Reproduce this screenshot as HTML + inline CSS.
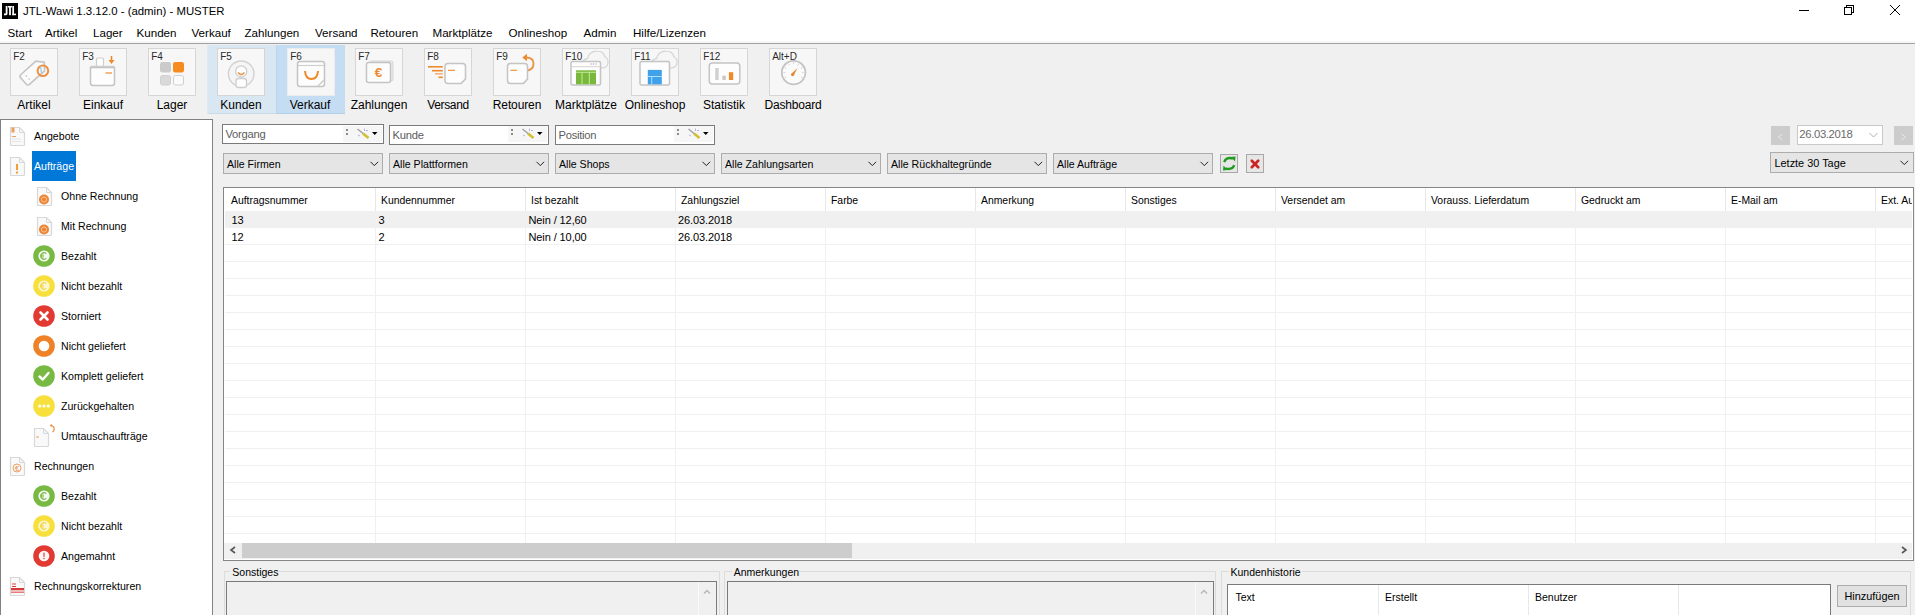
<!DOCTYPE html><html><head><meta charset="utf-8"><style>
*{margin:0;padding:0;box-sizing:border-box}
html,body{width:1915px;height:615px;overflow:hidden;background:#f0f0f0;font-family:"Liberation Sans",sans-serif;}
.t{position:absolute;white-space:nowrap;}
.r{position:absolute;}
svg{position:absolute;overflow:visible}
</style></head><body>
<div class="r" style="left:0px;top:0px;width:1915px;height:41px;background:#fff"></div>
<div class="r" style="left:0px;top:41px;width:1915px;height:2px;background:#f7f7f7"></div>
<div class="r" style="left:0px;top:43px;width:1915px;height:1px;background:#a0a0a0"></div>
<div class="r" style="left:2px;top:3px;width:16px;height:16px;background:#000"></div>
<svg style="left:2px;top:3px" width="16" height="16"><g fill="#fff"><path d="M3.7 3 H5.5 V10.8 Q5.5 12.2 4.1 12.2 H2 V10.6 H3.7 Z"/><rect x="6" y="3" width="3.9" height="1.5"/><rect x="7.1" y="3" width="1.8" height="9.2"/><rect x="10.3" y="3" width="1.7" height="9.2"/><rect x="10.3" y="10.6" width="3.7" height="1.6"/></g></svg>
<div class="t" style="left:23px;top:6.35px;font-size:11.4px;line-height:11.4px;color:#000;">JTL-Wawi 1.3.12.0 - (admin) - MUSTER</div>
<svg style="left:0;top:0" width="1915" height="44"><g stroke="#000" stroke-width="1" fill="none" shape-rendering="crispEdges"><line x1="1799" y1="10.5" x2="1809" y2="10.5"/><rect x="1844.5" y="7.5" width="7" height="7"/><polyline points="1846.5,7.5 1846.5,5.5 1853.5,5.5 1853.5,12.5 1851.5,12.5"/></g><g stroke="#000" stroke-width="1" fill="none"><line x1="1890" y1="5" x2="1900" y2="15"/><line x1="1900" y1="5" x2="1890" y2="15"/></g></svg>
<div class="t" style="left:7.5px;top:27.18px;font-size:11.6px;line-height:11.6px;color:#000;">Start</div>
<div class="t" style="left:45px;top:27.18px;font-size:11.6px;line-height:11.6px;color:#000;">Artikel</div>
<div class="t" style="left:93px;top:27.18px;font-size:11.6px;line-height:11.6px;color:#000;">Lager</div>
<div class="t" style="left:136.5px;top:27.18px;font-size:11.6px;line-height:11.6px;color:#000;">Kunden</div>
<div class="t" style="left:191.5px;top:27.18px;font-size:11.6px;line-height:11.6px;color:#000;">Verkauf</div>
<div class="t" style="left:244.5px;top:27.18px;font-size:11.6px;line-height:11.6px;color:#000;">Zahlungen</div>
<div class="t" style="left:315px;top:27.18px;font-size:11.6px;line-height:11.6px;color:#000;">Versand</div>
<div class="t" style="left:370.5px;top:27.18px;font-size:11.6px;line-height:11.6px;color:#000;">Retouren</div>
<div class="t" style="left:432.5px;top:27.18px;font-size:11.6px;line-height:11.6px;color:#000;">Marktplätze</div>
<div class="t" style="left:508.5px;top:27.18px;font-size:11.6px;line-height:11.6px;color:#000;">Onlineshop</div>
<div class="t" style="left:583.5px;top:27.18px;font-size:11.6px;line-height:11.6px;color:#000;">Admin</div>
<div class="t" style="left:633px;top:27.18px;font-size:11.6px;line-height:11.6px;color:#000;">Hilfe/Lizenzen</div>
<div class="r" style="left:207px;top:45px;width:69px;height:69px;background:#d9e7f3;border-left:1px solid #dce9f4;border-bottom:1px solid #c9dbeb"></div>
<div class="r" style="left:276px;top:45px;width:69px;height:69px;background:#c5ddf3;border-left:1px solid #b6d4ee;border-bottom:1px solid #b3d0ea"></div>
<div class="r" style="left:10px;top:48px;width:48px;height:48px;background:#f7f7f7;border:1px solid #d6d6d6"></div>
<div class="t" style="left:13.2px;top:51.53px;font-size:10px;line-height:10px;color:#2a2a2a;">F2</div>
<div class="t" style="left:-10px;top:98.54px;width:88px;text-align:center;font-size:12px;line-height:12px;color:#000;letter-spacing:0px">Artikel</div>
<div class="r" style="left:79px;top:48px;width:48px;height:48px;background:#f7f7f7;border:1px solid #d6d6d6"></div>
<div class="t" style="left:82.2px;top:51.53px;font-size:10px;line-height:10px;color:#2a2a2a;">F3</div>
<div class="t" style="left:59px;top:98.54px;width:88px;text-align:center;font-size:12px;line-height:12px;color:#000;letter-spacing:0px">Einkauf</div>
<div class="r" style="left:148px;top:48px;width:48px;height:48px;background:#f7f7f7;border:1px solid #d6d6d6"></div>
<div class="t" style="left:151.2px;top:51.53px;font-size:10px;line-height:10px;color:#2a2a2a;">F4</div>
<div class="t" style="left:128px;top:98.54px;width:88px;text-align:center;font-size:12px;line-height:12px;color:#000;letter-spacing:0px">Lager</div>
<div class="r" style="left:217px;top:48px;width:48px;height:48px;background:#f7f7f7;border:1px solid #d6d6d6"></div>
<div class="t" style="left:220.2px;top:51.53px;font-size:10px;line-height:10px;color:#2a2a2a;">F5</div>
<div class="t" style="left:197px;top:98.54px;width:88px;text-align:center;font-size:12px;line-height:12px;color:#000;letter-spacing:0px">Kunden</div>
<div class="r" style="left:287px;top:48px;width:48px;height:48px;background:#f6f6f6;border:1px solid #ececec"></div>
<div class="t" style="left:290.2px;top:51.53px;font-size:10px;line-height:10px;color:#2a2a2a;">F6</div>
<div class="t" style="left:266px;top:98.54px;width:88px;text-align:center;font-size:12px;line-height:12px;color:#000;letter-spacing:0px">Verkauf</div>
<div class="r" style="left:355px;top:48px;width:48px;height:48px;background:#f7f7f7;border:1px solid #d6d6d6"></div>
<div class="t" style="left:358.2px;top:51.53px;font-size:10px;line-height:10px;color:#2a2a2a;">F7</div>
<div class="t" style="left:335px;top:98.54px;width:88px;text-align:center;font-size:12px;line-height:12px;color:#000;letter-spacing:0px">Zahlungen</div>
<div class="r" style="left:424px;top:48px;width:48px;height:48px;background:#f7f7f7;border:1px solid #d6d6d6"></div>
<div class="t" style="left:427.2px;top:51.53px;font-size:10px;line-height:10px;color:#2a2a2a;">F8</div>
<div class="t" style="left:404px;top:98.54px;width:88px;text-align:center;font-size:12px;line-height:12px;color:#000;letter-spacing:-0.35px">Versand</div>
<div class="r" style="left:493px;top:48px;width:48px;height:48px;background:#f7f7f7;border:1px solid #d6d6d6"></div>
<div class="t" style="left:496.2px;top:51.53px;font-size:10px;line-height:10px;color:#2a2a2a;">F9</div>
<div class="t" style="left:473px;top:98.54px;width:88px;text-align:center;font-size:12px;line-height:12px;color:#000;letter-spacing:-0.12px">Retouren</div>
<div class="r" style="left:562px;top:48px;width:48px;height:48px;background:#f7f7f7;border:1px solid #d6d6d6"></div>
<div class="t" style="left:565.2px;top:51.53px;font-size:10px;line-height:10px;color:#2a2a2a;">F10</div>
<div class="t" style="left:542px;top:98.54px;width:88px;text-align:center;font-size:12px;line-height:12px;color:#000;letter-spacing:0px">Marktplätze</div>
<div class="r" style="left:631px;top:48px;width:48px;height:48px;background:#f7f7f7;border:1px solid #d6d6d6"></div>
<div class="t" style="left:634.2px;top:51.53px;font-size:10px;line-height:10px;color:#2a2a2a;">F11</div>
<div class="t" style="left:611px;top:98.54px;width:88px;text-align:center;font-size:12px;line-height:12px;color:#000;letter-spacing:0px">Onlineshop</div>
<div class="r" style="left:700px;top:48px;width:48px;height:48px;background:#f7f7f7;border:1px solid #d6d6d6"></div>
<div class="t" style="left:703.2px;top:51.53px;font-size:10px;line-height:10px;color:#2a2a2a;">F12</div>
<div class="t" style="left:680px;top:98.54px;width:88px;text-align:center;font-size:12px;line-height:12px;color:#000;letter-spacing:0px">Statistik</div>
<div class="r" style="left:769px;top:48px;width:48px;height:48px;background:#f7f7f7;border:1px solid #d6d6d6"></div>
<div class="t" style="left:772.2px;top:51.53px;font-size:10px;line-height:10px;color:#2a2a2a;">Alt+D</div>
<div class="t" style="left:749px;top:98.54px;width:88px;text-align:center;font-size:12px;line-height:12px;color:#000;letter-spacing:-0.2px">Dashboard</div>
<svg style="left:10px;top:48px" width="48" height="48" viewBox="0 0 48 48"><g transform="translate(23.5 24) rotate(-42)"><path d="M-11 -6.5 H9 L14.5 0 L9 6.5 H-11 Q-13.5 6.5 -13.5 4 V-4 Q-13.5 -6.5 -11 -6.5 Z" fill="#fbfbfb" stroke="#c4c4c4" stroke-width="1.6"/><line x1="-8" y1="-2.5" x2="-8" y2="-1" stroke="#aaa" stroke-width="1"/><line x1="-8" y1="1.5" x2="-8" y2="3" stroke="#bbb" stroke-width="1"/></g><circle cx="32.9" cy="22.8" r="5.3" fill="none" stroke="#ee9040" stroke-width="2"/><line x1="30.5" y1="18" x2="31.5" y2="25" stroke="#9ec6e6" stroke-width="1.3"/></svg>
<svg style="left:79px;top:48px" width="48" height="48" viewBox="0 0 48 48"><rect x="17.5" y="10" width="7" height="10" rx="1" fill="#fdfdfd" stroke="#cfcfcf" stroke-width="1.2"/><path d="M11.5 18.5 H35.5" stroke="#d0d0d0" stroke-width="1.5"/><path d="M11.5 19.5 H35.5 V35 Q35.5 37.5 33 37.5 H14 Q11.5 37.5 11.5 35 Z" fill="#fdfdfd" stroke="#c4c4c4" stroke-width="1.5"/><line x1="26.5" y1="25" x2="33" y2="25" stroke="#ef8a2c" stroke-width="1.2"/><line x1="32.5" y1="8" x2="32.5" y2="13" stroke="#ef8a2c" stroke-width="1.6"/><polygon points="29.5,12 35.5,12 32.5,16" fill="#ef8a2c"/></svg>
<svg style="left:148px;top:48px" width="48" height="48" viewBox="0 0 48 48"><rect x="12" y="14" width="11" height="10.5" rx="2.2" fill="#cbcbcb"/><rect x="25" y="14" width="11" height="10.5" rx="2.2" fill="#f68b1f"/><rect x="12.5" y="27.5" width="10" height="9.5" rx="2" fill="#d9d9d9" stroke="#cfcfcf" stroke-width="1"/><rect x="25.5" y="27.5" width="10" height="9.5" rx="2" fill="#fbfbfb" stroke="#cfcfcf" stroke-width="1"/></svg>
<svg style="left:217px;top:48px" width="48" height="48" viewBox="0 0 48 48"><circle cx="24.2" cy="25.8" r="12.8" fill="#f5f5f5" stroke="#d2d2d2" stroke-width="1.4"/><rect x="19" y="30.5" width="10.5" height="9" rx="2.5" fill="#fdfdfd" stroke="#cdcdcd" stroke-width="1.3"/><circle cx="24.2" cy="23.4" r="5.6" fill="#fdfdfd" stroke="#cdcdcd" stroke-width="1.3"/><path d="M21 24.6 Q24.2 28.6 27.4 24.6" fill="none" stroke="#e8974f" stroke-width="1.6"/></svg>
<svg style="left:287px;top:48px" width="48" height="48" viewBox="0 0 48 48"><rect x="10.5" y="13.5" width="27" height="25" rx="2.5" fill="#fdfdfd" stroke="#c4c4c4" stroke-width="1.5"/><line x1="11" y1="17.5" x2="37" y2="17.5" stroke="#d0d0d0" stroke-width="1.2"/><path d="M30.5 38.5 L37.5 31.5" stroke="#c8c8c8" stroke-width="1.3"/><path d="M18 23 Q18.5 31 24.5 31 Q30.5 31 31 23" fill="none" stroke="#ef8a2c" stroke-width="2"/></svg>
<svg style="left:355px;top:48px" width="48" height="48" viewBox="0 0 48 48"><rect x="14.5" y="13.2" width="23.5" height="19.5" rx="2" fill="#ececec" stroke="#dadada" stroke-width="1.2"/><rect x="11.5" y="14.5" width="24" height="20" rx="2" fill="#fdfdfd" stroke="#c4c4c4" stroke-width="1.5"/><text x="23.4" y="29.3" font-family="Liberation Sans" font-weight="bold" font-size="13.5" fill="#ee8a2e" text-anchor="middle">€</text></svg>
<svg style="left:424px;top:48px" width="48" height="48" viewBox="0 0 48 48"><path d="M24 15.5 H38.5 Q41.5 15.5 41.5 18.5 V31 L37 35.5 H24 Q21 35.5 21 32.5 V18.5 Q21 15.5 24 15.5 Z" fill="#fdfdfd" stroke="#c4c4c4" stroke-width="1.5"/><line x1="37" y1="35.5" x2="41.5" y2="31" stroke="#c8c8c8" stroke-width="1.2"/><line x1="24" y1="22.3" x2="31" y2="22.3" stroke="#ef8a2c" stroke-width="1.1"/><line x1="4" y1="18.8" x2="18.8" y2="18.8" stroke="#ef8a2c" stroke-width="1.6"/><line x1="8" y1="22.7" x2="18.8" y2="22.7" stroke="#ef8a2c" stroke-width="1.6"/><line x1="11" y1="25.8" x2="18.8" y2="25.8" stroke="#f1b27a" stroke-width="1.6"/><line x1="14.5" y1="29.3" x2="18.8" y2="29.3" stroke="#ef8a2c" stroke-width="1.6"/></svg>
<svg style="left:493px;top:48px" width="48" height="48" viewBox="0 0 48 48"><path d="M33 9.5 Q40.5 9.5 40.5 15.5 Q40.5 21.5 34.5 22.5" fill="none" stroke="#e8954a" stroke-width="1.9"/><polygon points="29.3,9.5 34,5.8 34,13.2" fill="#ef8a2c"/><path d="M17.5 15.5 H31.5 Q34.5 15.5 34.5 18.5 V31 L30.5 35.5 H17.5 Q14.5 35.5 14.5 32.5 V18.5 Q14.5 15.5 17.5 15.5 Z" fill="#fdfdfd" stroke="#c4c4c4" stroke-width="1.5"/><line x1="30.5" y1="35.5" x2="34.5" y2="31" stroke="#c8c8c8" stroke-width="1.2"/><line x1="17.5" y1="22.3" x2="24" y2="22.3" stroke="#ef8a2c" stroke-width="1.1"/></svg>
<svg style="left:562px;top:48px" width="48" height="48" viewBox="0 0 48 48"><path d="M20.5 18 Q19.5 11.5 25.5 10.5 Q27.5 3 35 3.2 Q41.5 3.2 43 9 Q46.5 10.5 46 15 Q45.5 19.5 41 19.8 H22 Z" fill="#f6f6f6" stroke="#d6d6d6" stroke-width="1.3"/><rect x="9" y="13.5" width="29.5" height="23.5" rx="1.5" fill="#fdfdfd" stroke="#c4c4c4" stroke-width="1.5"/><line x1="9.5" y1="18.7" x2="38" y2="18.7" stroke="#d4d4d4" stroke-width="1"/><circle cx="29" cy="16" r="0.8" fill="#d8a8a8"/><circle cx="31.5" cy="16" r="0.8" fill="#a8a8d8"/><circle cx="34" cy="16" r="0.8" fill="#d8a8a8"/><rect x="14" y="22.3" width="20" height="14" fill="#7ab83c"/><line x1="14" y1="24.3" x2="34" y2="24.3" stroke="#c8f0a0" stroke-width="0.9"/><line x1="20" y1="24.3" x2="20" y2="36.3" stroke="#c8f0a0" stroke-width="0.9"/><line x1="27.3" y1="24.3" x2="27.3" y2="36.3" stroke="#c8f0a0" stroke-width="0.9"/></svg>
<svg style="left:631px;top:48px" width="48" height="48" viewBox="0 0 48 48"><path d="M20.5 18 Q19.5 11.5 25.5 10.5 Q27.5 3 35 3.2 Q41.5 3.2 43 9 Q46.5 10.5 46 15 Q45.5 19.5 41 19.8 H22 Z" fill="#f6f6f6" stroke="#d6d6d6" stroke-width="1.3"/><rect x="9" y="13.5" width="29.5" height="23.5" rx="1.5" fill="#fdfdfd" stroke="#c4c4c4" stroke-width="1.5"/><rect x="16.8" y="21.9" width="14" height="14.4" fill="#3ea1e9"/><line x1="16.8" y1="28.5" x2="30.8" y2="28.5" stroke="#bfe6ff" stroke-width="0.9"/><line x1="20.7" y1="28.5" x2="20.7" y2="36.3" stroke="#bfe6ff" stroke-width="0.9"/></svg>
<svg style="left:700px;top:48px" width="48" height="48" viewBox="0 0 48 48"><rect x="9.3" y="15" width="30.5" height="21" rx="3" fill="#fdfdfd" stroke="#c4c4c4" stroke-width="1.5"/><rect x="15.2" y="20" width="3.5" height="12" fill="#d0d0d0"/><rect x="22.3" y="27.7" width="3.5" height="4.3" fill="#c9c9c9"/><rect x="28.9" y="24.2" width="4.3" height="7.8" fill="#ef8a2c"/></svg>
<svg style="left:769px;top:48px" width="48" height="48" viewBox="0 0 48 48"><circle cx="24.6" cy="24.6" r="11.8" fill="#fbfbfb" stroke="#c4c4c4" stroke-width="1.8"/><line x1="17.24" y1="28.85" x2="15.77" y2="29.70" stroke="#d0d0d0" stroke-width="1"/><line x1="16.10" y1="24.60" x2="14.40" y2="24.60" stroke="#d0d0d0" stroke-width="1"/><line x1="17.24" y1="20.35" x2="15.77" y2="19.50" stroke="#d0d0d0" stroke-width="1"/><line x1="20.35" y1="17.24" x2="19.50" y2="15.77" stroke="#d0d0d0" stroke-width="1"/><line x1="24.60" y1="16.10" x2="24.60" y2="14.40" stroke="#d0d0d0" stroke-width="1"/><line x1="28.85" y1="17.24" x2="29.70" y2="15.77" stroke="#d0d0d0" stroke-width="1"/><line x1="31.96" y1="20.35" x2="33.43" y2="19.50" stroke="#d0d0d0" stroke-width="1"/><line x1="33.10" y1="24.60" x2="34.80" y2="24.60" stroke="#d0d0d0" stroke-width="1"/><line x1="31.96" y1="28.85" x2="33.43" y2="29.70" stroke="#d0d0d0" stroke-width="1"/><path d="M22.6 25.6 L28.6 20 L24.6 27.6 Z" fill="#e08a35"/><circle cx="23.6" cy="26.6" r="1.6" fill="#e08a35"/></svg>

<div class="r" style="left:0px;top:119px;width:213px;height:496px;background:#fff;border:1px solid #828282;border-bottom:none"></div>
<div class="r" style="left:32px;top:151px;width:44px;height:30px;background:#0078d7"></div>
<div class="t" style="left:34px;top:131.03px;font-size:10.6px;line-height:10.6px;color:#000;">Angebote</div>
<div class="t" style="left:34px;top:161.03px;font-size:10.6px;line-height:10.6px;color:#fff;">Aufträge</div>
<div class="t" style="left:61px;top:191.03px;font-size:10.6px;line-height:10.6px;color:#000;">Ohne Rechnung</div>
<div class="t" style="left:61px;top:221.03px;font-size:10.6px;line-height:10.6px;color:#000;">Mit Rechnung</div>
<div class="t" style="left:61px;top:251.03px;font-size:10.6px;line-height:10.6px;color:#000;">Bezahlt</div>
<div class="t" style="left:61px;top:281.03px;font-size:10.6px;line-height:10.6px;color:#000;">Nicht bezahlt</div>
<div class="t" style="left:61px;top:311.03px;font-size:10.6px;line-height:10.6px;color:#000;">Storniert</div>
<div class="t" style="left:61px;top:341.03px;font-size:10.6px;line-height:10.6px;color:#000;">Nicht geliefert</div>
<div class="t" style="left:61px;top:371.03px;font-size:10.6px;line-height:10.6px;color:#000;">Komplett geliefert</div>
<div class="t" style="left:61px;top:401.03px;font-size:10.6px;line-height:10.6px;color:#000;">Zurückgehalten</div>
<div class="t" style="left:61px;top:431.03px;font-size:10.6px;line-height:10.6px;color:#000;">Umtauschaufträge</div>
<div class="t" style="left:34px;top:461.03px;font-size:10.6px;line-height:10.6px;color:#000;">Rechnungen</div>
<div class="t" style="left:61px;top:491.03px;font-size:10.6px;line-height:10.6px;color:#000;">Bezahlt</div>
<div class="t" style="left:61px;top:521.03px;font-size:10.6px;line-height:10.6px;color:#000;">Nicht bezahlt</div>
<div class="t" style="left:61px;top:551.03px;font-size:10.6px;line-height:10.6px;color:#000;">Angemahnt</div>
<div class="t" style="left:34px;top:581.03px;font-size:10.6px;line-height:10.6px;color:#000;">Rechnungskorrekturen</div>
<svg style="left:8.5px;top:126px" width="17" height="21" viewBox="0 0 17 21"><path d="M1.5 1.5 H10.5 L15.5 6.5 V18.5 Q15.5 19.5 14.5 19.5 H2.5 Q1.5 19.5 1.5 18.5 Z" fill="#f9f9f9" stroke="#d8d8d8" stroke-width="1.2"/><path d="M10.5 1.5 V6.5 H15.5" fill="none" stroke="#d8d8d8" stroke-width="1"/><rect x="2.5" y="1.5" width="3" height="5" fill="#e8a060"/><line x1="3" y1="10.5" x2="7" y2="10.5" stroke="#e8a060" stroke-width="1"/><line x1="3" y1="13" x2="12" y2="13" stroke="#e6e6e6" stroke-width="1"/><line x1="3" y1="15.5" x2="12" y2="15.5" stroke="#e6e6e6" stroke-width="1"/></svg>
<svg style="left:8.5px;top:156px" width="17" height="21" viewBox="0 0 17 21"><path d="M1.5 1.5 H10.5 L15.5 6.5 V18.5 Q15.5 19.5 14.5 19.5 H2.5 Q1.5 19.5 1.5 18.5 Z" fill="#f9f9f9" stroke="#d8d8d8" stroke-width="1.2"/><path d="M10.5 1.5 V6.5 H15.5" fill="none" stroke="#d8d8d8" stroke-width="1"/><rect x="7" y="8" width="2" height="6" fill="#f0a030"/><rect x="7" y="15.5" width="2" height="2" fill="#f0a030"/></svg>
<svg style="left:35.5px;top:186px" width="17" height="21" viewBox="0 0 17 21"><path d="M1.5 1.5 H10.5 L15.5 6.5 V18.5 Q15.5 19.5 14.5 19.5 H2.5 Q1.5 19.5 1.5 18.5 Z" fill="#f9f9f9" stroke="#d8d8d8" stroke-width="1.2"/><path d="M10.5 1.5 V6.5 H15.5" fill="none" stroke="#d8d8d8" stroke-width="1"/><circle cx="8" cy="13.5" r="5" fill="#ec8432"/><circle cx="8" cy="13.5" r="2.6" fill="none" stroke="#f6c8a0" stroke-width="1"/></svg>
<svg style="left:35.5px;top:216px" width="17" height="21" viewBox="0 0 17 21"><path d="M1.5 1.5 H10.5 L15.5 6.5 V18.5 Q15.5 19.5 14.5 19.5 H2.5 Q1.5 19.5 1.5 18.5 Z" fill="#f9f9f9" stroke="#d8d8d8" stroke-width="1.2"/><path d="M10.5 1.5 V6.5 H15.5" fill="none" stroke="#d8d8d8" stroke-width="1"/><circle cx="8" cy="13.5" r="5" fill="#ec8432"/><circle cx="8" cy="13.5" r="2.6" fill="none" stroke="#f6c8a0" stroke-width="1"/></svg>
<svg style="left:33px;top:245px" width="22" height="22" viewBox="0 0 22 22"><circle cx="11" cy="11" r="10.8" fill="#78b943"/><circle cx="11" cy="11" r="5.6" fill="#f4f9ef"/><path d="M13.3 8.6 A3.2 3.2 0 1 0 13.3 13.4" fill="none" stroke="#78b943" stroke-width="1.2"/><line x1="7.2" y1="10.2" x2="11" y2="10.2" stroke="#78b943" stroke-width="0.9"/><line x1="7.2" y1="11.9" x2="11" y2="11.9" stroke="#78b943" stroke-width="0.9"/></svg>
<svg style="left:33px;top:275px" width="22" height="22" viewBox="0 0 22 22"><circle cx="11" cy="11" r="10.8" fill="#f7e03c"/><circle cx="11" cy="11" r="5.6" fill="#fcf6cf"/><path d="M13.3 8.6 A3.2 3.2 0 1 0 13.3 13.4" fill="none" stroke="#eed64a" stroke-width="1.2"/><line x1="7.2" y1="10.2" x2="11" y2="10.2" stroke="#eed64a" stroke-width="0.9"/><line x1="7.2" y1="11.9" x2="11" y2="11.9" stroke="#eed64a" stroke-width="0.9"/></svg>
<svg style="left:33px;top:305px" width="22" height="22" viewBox="0 0 22 22"><circle cx="11" cy="11" r="10.8" fill="#e23a33"/><g stroke="#fff" stroke-width="2.6" stroke-linecap="round"><line x1="7.5" y1="7.5" x2="14.5" y2="14.5"/><line x1="14.5" y1="7.5" x2="7.5" y2="14.5"/></g></svg>
<svg style="left:33px;top:335px" width="22" height="22" viewBox="0 0 22 22"><circle cx="11" cy="11" r="10.8" fill="#ef8127"/><circle cx="11" cy="11" r="5.3" fill="#fff"/></svg>
<svg style="left:33px;top:365px" width="22" height="22" viewBox="0 0 22 22"><circle cx="11" cy="11" r="10.8" fill="#78b943"/><polyline points="6.5,11.5 9.8,14.5 15.5,8" fill="none" stroke="#fff" stroke-width="2.4" stroke-linecap="round" stroke-linejoin="round"/></svg>
<svg style="left:33px;top:395px" width="22" height="22" viewBox="0 0 22 22"><circle cx="11" cy="11" r="10.8" fill="#f7e03c"/><circle cx="6.8" cy="11" r="1.6" fill="#fff"/><circle cx="11" cy="11" r="1.6" fill="#fff"/><circle cx="15.2" cy="11" r="1.6" fill="#fff"/></svg>
<svg style="left:33px;top:427px" width="17" height="21" viewBox="0 0 17 21"><path d="M1.5 1.5 H10.5 L15.5 6.5 V18.5 Q15.5 19.5 14.5 19.5 H2.5 Q1.5 19.5 1.5 18.5 Z" fill="#f9f9f9" stroke="#d8d8d8" stroke-width="1.2"/><path d="M10.5 1.5 V6.5 H15.5" fill="none" stroke="#d8d8d8" stroke-width="1"/><line x1="3" y1="10" x2="6" y2="10" stroke="#e8a060" stroke-width="1"/></svg>
<svg style="left:49px;top:424px" width="8" height="10" viewBox="0 0 8 10"><path d="M2 1.5 A3.5 3.5 0 0 1 3.5 8" fill="none" stroke="#e8904a" stroke-width="1.2"/><polygon points="0.5,1.5 3,0 3,3" fill="#e8904a"/></svg>
<svg style="left:8.5px;top:456px" width="17" height="21" viewBox="0 0 17 21"><path d="M1.5 1.5 H10.5 L15.5 6.5 V18.5 Q15.5 19.5 14.5 19.5 H2.5 Q1.5 19.5 1.5 18.5 Z" fill="#f9f9f9" stroke="#d8d8d8" stroke-width="1.2"/><path d="M10.5 1.5 V6.5 H15.5" fill="none" stroke="#d8d8d8" stroke-width="1"/><circle cx="8" cy="12" r="4" fill="none" stroke="#f0a060" stroke-width="1"/><text x="8" y="15" font-family="Liberation Sans" font-size="7.5" fill="#e8904a" text-anchor="middle">€</text></svg>
<svg style="left:33px;top:485px" width="22" height="22" viewBox="0 0 22 22"><circle cx="11" cy="11" r="10.8" fill="#78b943"/><circle cx="11" cy="11" r="5.6" fill="#f4f9ef"/><path d="M13.3 8.6 A3.2 3.2 0 1 0 13.3 13.4" fill="none" stroke="#78b943" stroke-width="1.2"/><line x1="7.2" y1="10.2" x2="11" y2="10.2" stroke="#78b943" stroke-width="0.9"/><line x1="7.2" y1="11.9" x2="11" y2="11.9" stroke="#78b943" stroke-width="0.9"/></svg>
<svg style="left:33px;top:515px" width="22" height="22" viewBox="0 0 22 22"><circle cx="11" cy="11" r="10.8" fill="#f7e03c"/><circle cx="11" cy="11" r="5.6" fill="#fcf6cf"/><path d="M13.3 8.6 A3.2 3.2 0 1 0 13.3 13.4" fill="none" stroke="#eed64a" stroke-width="1.2"/><line x1="7.2" y1="10.2" x2="11" y2="10.2" stroke="#eed64a" stroke-width="0.9"/><line x1="7.2" y1="11.9" x2="11" y2="11.9" stroke="#eed64a" stroke-width="0.9"/></svg>
<svg style="left:33px;top:545px" width="22" height="22" viewBox="0 0 22 22"><circle cx="11" cy="11" r="10.8" fill="#e23a33"/><circle cx="11" cy="11" r="5.3" fill="#fdf6f6"/><rect x="10.3" y="7.6" width="1.4" height="4.2" fill="#e05a50"/><rect x="10.3" y="12.8" width="1.4" height="1.4" fill="#e05a50"/></svg>
<svg style="left:8.5px;top:576px" width="17" height="21" viewBox="0 0 17 21"><path d="M1.5 1.5 H10.5 L15.5 6.5 V18.5 Q15.5 19.5 14.5 19.5 H2.5 Q1.5 19.5 1.5 18.5 Z" fill="#f9f9f9" stroke="#d8d8d8" stroke-width="1.2"/><path d="M10.5 1.5 V6.5 H15.5" fill="none" stroke="#d8d8d8" stroke-width="1"/><line x1="3" y1="8" x2="7" y2="8" stroke="#d84040" stroke-width="1"/><line x1="3" y1="10.5" x2="7" y2="10.5" stroke="#d84040" stroke-width="1"/><rect x="2" y="12" width="13" height="2.3" fill="#d83a3a"/><rect x="2" y="15.5" width="13" height="1.5" fill="#e87a7a"/></svg>

<div class="r" style="left:222px;top:124px;width:162px;height:20px;background:#fff;border:1px solid #7a7a7a"></div>
<div class="r" style="left:343px;top:126px;width:39px;height:16px;background:#f6f6f6"></div>
<div class="t" style="left:225.5px;top:128.72px;font-size:11.2px;line-height:11.2px;color:#5c5c5c;letter-spacing:-0.25px">Vorgang</div>
<div class="r" style="left:346px;top:129px;width:2px;height:2px;background:#8a8a8a"></div>
<div class="r" style="left:346px;top:133px;width:2px;height:2px;background:#8a8a8a"></div>
<svg style="left:356px;top:128px" width="14" height="12"><line x1="1.5" y1="1" x2="8" y2="6.3" stroke="#a0a0a0" stroke-width="1.4"/><line x1="7" y1="5.5" x2="12.5" y2="10" stroke="#d2c030" stroke-width="2.6"/><line x1="8.5" y1="0.5" x2="8.5" y2="3" stroke="#b8b0e8" stroke-width="1"/><line x1="10" y1="2.5" x2="12" y2="2.5" stroke="#b8b0e8" stroke-width="1"/><line x1="2" y1="7" x2="4" y2="8" stroke="#b8b0e8" stroke-width="1"/></svg>
<svg style="left:372px;top:132px" width="6" height="4"><polygon points="0,0 5.5,0 2.75,3" fill="#000"/></svg>
<div class="r" style="left:389px;top:125px;width:160px;height:20px;background:#fff;border:1px solid #7a7a7a"></div>
<div class="r" style="left:508px;top:126px;width:39px;height:16px;background:#f6f6f6"></div>
<div class="t" style="left:392.5px;top:129.52px;font-size:11.2px;line-height:11.2px;color:#5c5c5c;letter-spacing:-0.25px">Kunde</div>
<div class="r" style="left:511px;top:129px;width:2px;height:2px;background:#8a8a8a"></div>
<div class="r" style="left:511px;top:133px;width:2px;height:2px;background:#8a8a8a"></div>
<svg style="left:521px;top:128px" width="14" height="12"><line x1="1.5" y1="1" x2="8" y2="6.3" stroke="#a0a0a0" stroke-width="1.4"/><line x1="7" y1="5.5" x2="12.5" y2="10" stroke="#d2c030" stroke-width="2.6"/><line x1="8.5" y1="0.5" x2="8.5" y2="3" stroke="#b8b0e8" stroke-width="1"/><line x1="10" y1="2.5" x2="12" y2="2.5" stroke="#b8b0e8" stroke-width="1"/><line x1="2" y1="7" x2="4" y2="8" stroke="#b8b0e8" stroke-width="1"/></svg>
<svg style="left:537px;top:132px" width="6" height="4"><polygon points="0,0 5.5,0 2.75,3" fill="#000"/></svg>
<div class="r" style="left:555px;top:125px;width:160px;height:20px;background:#fff;border:1px solid #7a7a7a"></div>
<div class="r" style="left:674px;top:126px;width:39px;height:16px;background:#f6f6f6"></div>
<div class="t" style="left:558.5px;top:129.52px;font-size:11.2px;line-height:11.2px;color:#5c5c5c;letter-spacing:-0.25px">Position</div>
<div class="r" style="left:677px;top:129px;width:2px;height:2px;background:#8a8a8a"></div>
<div class="r" style="left:677px;top:133px;width:2px;height:2px;background:#8a8a8a"></div>
<svg style="left:687px;top:128px" width="14" height="12"><line x1="1.5" y1="1" x2="8" y2="6.3" stroke="#a0a0a0" stroke-width="1.4"/><line x1="7" y1="5.5" x2="12.5" y2="10" stroke="#d2c030" stroke-width="2.6"/><line x1="8.5" y1="0.5" x2="8.5" y2="3" stroke="#b8b0e8" stroke-width="1"/><line x1="10" y1="2.5" x2="12" y2="2.5" stroke="#b8b0e8" stroke-width="1"/><line x1="2" y1="7" x2="4" y2="8" stroke="#b8b0e8" stroke-width="1"/></svg>
<svg style="left:703px;top:132px" width="6" height="4"><polygon points="0,0 5.5,0 2.75,3" fill="#000"/></svg>
<div class="r" style="left:223px;top:153px;width:160px;height:21px;background:#e5e5e5;border:1px solid #acacac"></div>
<div class="t" style="left:227px;top:159.03px;font-size:10.6px;line-height:10.6px;color:#000;">Alle Firmen</div>
<svg style="left:369.5px;top:161px" width="10" height="6"><polyline points="0.5,0.8 4.3,4.6 8.1,0.8" stroke="#222" stroke-width="1" fill="none"/></svg>
<div class="r" style="left:389px;top:153px;width:160px;height:21px;background:#e5e5e5;border:1px solid #acacac"></div>
<div class="t" style="left:393px;top:159.03px;font-size:10.6px;line-height:10.6px;color:#000;">Alle Plattformen</div>
<svg style="left:535.5px;top:161px" width="10" height="6"><polyline points="0.5,0.8 4.3,4.6 8.1,0.8" stroke="#222" stroke-width="1" fill="none"/></svg>
<div class="r" style="left:555px;top:153px;width:160px;height:21px;background:#e5e5e5;border:1px solid #acacac"></div>
<div class="t" style="left:559px;top:159.03px;font-size:10.6px;line-height:10.6px;color:#000;">Alle Shops</div>
<svg style="left:701.5px;top:161px" width="10" height="6"><polyline points="0.5,0.8 4.3,4.6 8.1,0.8" stroke="#222" stroke-width="1" fill="none"/></svg>
<div class="r" style="left:721px;top:153px;width:160px;height:21px;background:#e5e5e5;border:1px solid #acacac"></div>
<div class="t" style="left:725px;top:159.03px;font-size:10.6px;line-height:10.6px;color:#000;">Alle Zahlungsarten</div>
<svg style="left:867.5px;top:161px" width="10" height="6"><polyline points="0.5,0.8 4.3,4.6 8.1,0.8" stroke="#222" stroke-width="1" fill="none"/></svg>
<div class="r" style="left:887px;top:153px;width:160px;height:21px;background:#e5e5e5;border:1px solid #acacac"></div>
<div class="t" style="left:891px;top:159.03px;font-size:10.6px;line-height:10.6px;color:#000;">Alle Rückhaltegründe</div>
<svg style="left:1033.5px;top:161px" width="10" height="6"><polyline points="0.5,0.8 4.3,4.6 8.1,0.8" stroke="#222" stroke-width="1" fill="none"/></svg>
<div class="r" style="left:1053px;top:153px;width:160px;height:21px;background:#e5e5e5;border:1px solid #acacac"></div>
<div class="t" style="left:1057px;top:159.03px;font-size:10.6px;line-height:10.6px;color:#000;">Alle Aufträge</div>
<svg style="left:1199.5px;top:161px" width="10" height="6"><polyline points="0.5,0.8 4.3,4.6 8.1,0.8" stroke="#222" stroke-width="1" fill="none"/></svg>
<div class="r" style="left:1220px;top:154px;width:18px;height:19px;background:#e6e6e6;border:1px solid #a8a8a8"></div>
<div class="r" style="left:1246px;top:154px;width:18px;height:19px;background:#e6e6e6;border:1px solid #a8a8a8"></div>
<svg style="left:1221px;top:155px" width="17" height="17"><g fill="none" stroke="#1f9a1f" stroke-width="2.3"><path d="M3.2 7.2 Q4.5 3 9 3 Q11 3 12 4"/><path d="M13.2 10.2 Q12 14 7.5 14 Q5.5 14 4.5 13"/></g><polygon points="10,2 14.5,1.5 14,6.5" fill="#1f9a1f"/><polygon points="6.5,15 2,15.5 2.5,10.5" fill="#1f9a1f"/></svg>
<svg style="left:1248px;top:157px" width="14" height="14"><g stroke="#cc2424" stroke-width="2.7" stroke-linecap="round"><line x1="3.8" y1="3.8" x2="10.2" y2="10.2"/><line x1="10.2" y1="3.8" x2="3.8" y2="10.2"/></g></svg>
<div class="r" style="left:1771px;top:126px;width:19px;height:19px;background:#cccccc"></div>
<div class="r" style="left:1894px;top:126px;width:19px;height:19px;background:#cccccc"></div>
<svg style="left:1771px;top:126px" width="19" height="19"><polyline points="11.5,8 7.5,11 11.5,14" stroke="#e8e8e8" stroke-width="1" fill="none"/></svg>
<svg style="left:1894px;top:126px" width="19" height="19"><polyline points="7.5,8 11.5,11 7.5,14" stroke="#e8e8e8" stroke-width="1" fill="none"/></svg>
<div class="r" style="left:1797px;top:125px;width:86px;height:20px;background:#fff;border:1px solid #c8c8c8"></div>
<div class="t" style="left:1799.3px;top:129.43px;font-size:11.3px;line-height:11.3px;color:#6a6a6a;letter-spacing:-0.35px">26.03.2018</div>
<svg style="left:1869px;top:132px" width="10" height="7"><polyline points="0.5,1 4.5,5 8.5,1" stroke="#b0b0b0" stroke-width="1" fill="none"/></svg>
<div class="r" style="left:1770px;top:152px;width:144px;height:21px;background:#e5e5e5;border:1px solid #acacac"></div>
<div class="t" style="left:1774.5px;top:157.77px;font-size:10.9px;line-height:10.9px;color:#000;">Letzte 30 Tage</div>
<svg style="left:1900px;top:160px" width="10" height="6"><polyline points="0.5,0.8 4.3,4.6 8.1,0.8" stroke="#222" stroke-width="1" fill="none"/></svg>
<div class="r" style="left:223px;top:187px;width:1691px;height:374px;background:#fff;border:1px solid #858585"></div>
<div class="r" style="left:225px;top:227px;width:1687px;height:1px;background:#f0f0f0"></div>
<div class="r" style="left:225px;top:244px;width:1687px;height:1px;background:#f0f0f0"></div>
<div class="r" style="left:225px;top:261px;width:1687px;height:1px;background:#f0f0f0"></div>
<div class="r" style="left:225px;top:278px;width:1687px;height:1px;background:#f0f0f0"></div>
<div class="r" style="left:225px;top:295px;width:1687px;height:1px;background:#f0f0f0"></div>
<div class="r" style="left:225px;top:312px;width:1687px;height:1px;background:#f0f0f0"></div>
<div class="r" style="left:225px;top:329px;width:1687px;height:1px;background:#f0f0f0"></div>
<div class="r" style="left:225px;top:346px;width:1687px;height:1px;background:#f0f0f0"></div>
<div class="r" style="left:225px;top:363px;width:1687px;height:1px;background:#f0f0f0"></div>
<div class="r" style="left:225px;top:380px;width:1687px;height:1px;background:#f0f0f0"></div>
<div class="r" style="left:225px;top:397px;width:1687px;height:1px;background:#f0f0f0"></div>
<div class="r" style="left:225px;top:414px;width:1687px;height:1px;background:#f0f0f0"></div>
<div class="r" style="left:225px;top:431px;width:1687px;height:1px;background:#f0f0f0"></div>
<div class="r" style="left:225px;top:448px;width:1687px;height:1px;background:#f0f0f0"></div>
<div class="r" style="left:225px;top:465px;width:1687px;height:1px;background:#f0f0f0"></div>
<div class="r" style="left:225px;top:482px;width:1687px;height:1px;background:#f0f0f0"></div>
<div class="r" style="left:225px;top:499px;width:1687px;height:1px;background:#f0f0f0"></div>
<div class="r" style="left:225px;top:516px;width:1687px;height:1px;background:#f0f0f0"></div>
<div class="r" style="left:225px;top:533px;width:1687px;height:1px;background:#f0f0f0"></div>
<div class="r" style="left:225px;top:211px;width:1687px;height:16px;background:#f0f0f0"></div>
<div class="r" style="left:375px;top:188px;width:1px;height:23px;background:#e8e8e8"></div>
<div class="r" style="left:375px;top:211px;width:1px;height:332px;background:#f0f0f0"></div>
<div class="r" style="left:525px;top:188px;width:1px;height:23px;background:#e8e8e8"></div>
<div class="r" style="left:525px;top:211px;width:1px;height:332px;background:#f0f0f0"></div>
<div class="r" style="left:675px;top:188px;width:1px;height:23px;background:#e8e8e8"></div>
<div class="r" style="left:675px;top:211px;width:1px;height:332px;background:#f0f0f0"></div>
<div class="r" style="left:825px;top:188px;width:1px;height:23px;background:#e8e8e8"></div>
<div class="r" style="left:825px;top:211px;width:1px;height:332px;background:#f0f0f0"></div>
<div class="r" style="left:975px;top:188px;width:1px;height:23px;background:#e8e8e8"></div>
<div class="r" style="left:975px;top:211px;width:1px;height:332px;background:#f0f0f0"></div>
<div class="r" style="left:1125px;top:188px;width:1px;height:23px;background:#e8e8e8"></div>
<div class="r" style="left:1125px;top:211px;width:1px;height:332px;background:#f0f0f0"></div>
<div class="r" style="left:1275px;top:188px;width:1px;height:23px;background:#e8e8e8"></div>
<div class="r" style="left:1275px;top:211px;width:1px;height:332px;background:#f0f0f0"></div>
<div class="r" style="left:1425px;top:188px;width:1px;height:23px;background:#e8e8e8"></div>
<div class="r" style="left:1425px;top:211px;width:1px;height:332px;background:#f0f0f0"></div>
<div class="r" style="left:1575px;top:188px;width:1px;height:23px;background:#e8e8e8"></div>
<div class="r" style="left:1575px;top:211px;width:1px;height:332px;background:#f0f0f0"></div>
<div class="r" style="left:1725px;top:188px;width:1px;height:23px;background:#e8e8e8"></div>
<div class="r" style="left:1725px;top:211px;width:1px;height:332px;background:#f0f0f0"></div>
<div class="r" style="left:1875px;top:188px;width:1px;height:23px;background:#e8e8e8"></div>
<div class="r" style="left:1875px;top:211px;width:1px;height:332px;background:#f0f0f0"></div>
<div class="r" style="left:224px;top:188px;width:1688px;height:23px;overflow:hidden">
<div class="t" style="left:7px;top:8.00px;font-size:10.4px;line-height:10.4px;color:#000;">Auftragsnummer</div>
<div class="t" style="left:157px;top:8.00px;font-size:10.4px;line-height:10.4px;color:#000;">Kundennummer</div>
<div class="t" style="left:307px;top:8.00px;font-size:10.4px;line-height:10.4px;color:#000;">Ist bezahlt</div>
<div class="t" style="left:457px;top:8.00px;font-size:10.4px;line-height:10.4px;color:#000;">Zahlungsziel</div>
<div class="t" style="left:607px;top:8.00px;font-size:10.4px;line-height:10.4px;color:#000;">Farbe</div>
<div class="t" style="left:757px;top:8.00px;font-size:10.4px;line-height:10.4px;color:#000;">Anmerkung</div>
<div class="t" style="left:907px;top:8.00px;font-size:10.4px;line-height:10.4px;color:#000;">Sonstiges</div>
<div class="t" style="left:1057px;top:8.00px;font-size:10.4px;line-height:10.4px;color:#000;">Versendet am</div>
<div class="t" style="left:1207px;top:8.00px;font-size:10.4px;line-height:10.4px;color:#000;">Vorauss. Lieferdatum</div>
<div class="t" style="left:1357px;top:8.00px;font-size:10.4px;line-height:10.4px;color:#000;">Gedruckt am</div>
<div class="t" style="left:1507px;top:8.00px;font-size:10.4px;line-height:10.4px;color:#000;">E-Mail am</div>
<div class="t" style="left:1657px;top:8.00px;font-size:10.4px;line-height:10.4px;color:#000;">Ext. Auftragsnummer</div>
</div>
<div class="t" style="left:231.5px;top:214.69px;font-size:11px;line-height:11px;color:#000;letter-spacing:-0.1px">13</div>
<div class="t" style="left:378.5px;top:214.69px;font-size:11px;line-height:11px;color:#000;letter-spacing:-0.1px">3</div>
<div class="t" style="left:528.5px;top:214.69px;font-size:11px;line-height:11px;color:#000;letter-spacing:-0.1px">Nein / 12,60</div>
<div class="t" style="left:678px;top:214.69px;font-size:11px;line-height:11px;color:#000;letter-spacing:-0.1px">26.03.2018</div>
<div class="t" style="left:231.5px;top:231.69px;font-size:11px;line-height:11px;color:#000;letter-spacing:-0.1px">12</div>
<div class="t" style="left:378.5px;top:231.69px;font-size:11px;line-height:11px;color:#000;letter-spacing:-0.1px">2</div>
<div class="t" style="left:528.5px;top:231.69px;font-size:11px;line-height:11px;color:#000;letter-spacing:-0.1px">Nein / 10,00</div>
<div class="t" style="left:678px;top:231.69px;font-size:11px;line-height:11px;color:#000;letter-spacing:-0.1px">26.03.2018</div>
<div class="r" style="left:224px;top:543px;width:1688px;height:16px;background:#f0f0f0"></div>
<div class="r" style="left:242px;top:543px;width:610px;height:15px;background:#cdcdcd"></div>
<svg style="left:228px;top:545px" width="10" height="10"><polyline points="7,2 3,5 7,8" stroke="#555" stroke-width="1.6" fill="none"/></svg>
<svg style="left:1899px;top:545px" width="10" height="10"><polyline points="3,2 7,5 3,8" stroke="#555" stroke-width="1.6" fill="none"/></svg>
<div class="r" style="left:224px;top:571px;width:496px;height:44px;border:1px solid #dcdcdc;border-bottom:none"></div>
<div class="r" style="left:230.3px;top:565px;width:49.0px;height:13px;background:#f0f0f0"></div>
<div class="t" style="left:232.3px;top:567.11px;font-size:10.5px;line-height:10.5px;color:#000;">Sonstiges</div>
<div class="r" style="left:724px;top:571px;width:492px;height:44px;border:1px solid #dcdcdc;border-bottom:none"></div>
<div class="r" style="left:731.7px;top:565px;width:67.0px;height:13px;background:#f0f0f0"></div>
<div class="t" style="left:733.7px;top:567.11px;font-size:10.5px;line-height:10.5px;color:#000;">Anmerkungen</div>
<div class="r" style="left:1221px;top:571px;width:690px;height:44px;border:1px solid #dcdcdc;border-bottom:none"></div>
<div class="r" style="left:1228.5px;top:565px;width:73.0px;height:13px;background:#f0f0f0"></div>
<div class="t" style="left:1230.5px;top:567.11px;font-size:10.5px;line-height:10.5px;color:#000;">Kundenhistorie</div>
<div class="r" style="left:226px;top:581px;width:491px;height:34px;background:#f0f0f0;border:1px solid #7a7a7a;border-bottom:none"></div>
<div class="r" style="left:698px;top:582px;width:1px;height:33px;background:#fafafa"></div>
<svg style="left:703px;top:588px" width="9" height="8"><polyline points="1,5.5 4,2.5 7,5.5" stroke="#b8b8b8" stroke-width="1.5" fill="none"/></svg>
<div class="r" style="left:727px;top:581px;width:487px;height:34px;background:#f0f0f0;border:1px solid #7a7a7a;border-bottom:none"></div>
<div class="r" style="left:1195px;top:582px;width:1px;height:33px;background:#fafafa"></div>
<svg style="left:1200px;top:588px" width="9" height="8"><polyline points="1,5.5 4,2.5 7,5.5" stroke="#b8b8b8" stroke-width="1.5" fill="none"/></svg>
<div class="r" style="left:1227px;top:584px;width:604px;height:31px;background:#fff;border:1px solid #7a7a7a;border-bottom:none"></div>
<div class="r" style="left:1378px;top:585px;width:1px;height:30px;background:#e8e8e8"></div>
<div class="r" style="left:1528px;top:585px;width:1px;height:30px;background:#e8e8e8"></div>
<div class="r" style="left:1678px;top:585px;width:1px;height:30px;background:#e8e8e8"></div>
<div class="t" style="left:1235.5px;top:592.11px;font-size:10.5px;line-height:10.5px;color:#000;">Text</div>
<div class="t" style="left:1385px;top:592.11px;font-size:10.5px;line-height:10.5px;color:#000;">Erstellt</div>
<div class="t" style="left:1535px;top:592.11px;font-size:10.5px;line-height:10.5px;color:#000;">Benutzer</div>
<div class="r" style="left:1837px;top:585px;width:70px;height:22px;background:#e1e1e1;border:1px solid #adadad"></div>
<div class="t" style="left:1844.5px;top:590.77px;font-size:10.9px;line-height:10.9px;color:#000;">Hinzufügen</div>
</body></html>
